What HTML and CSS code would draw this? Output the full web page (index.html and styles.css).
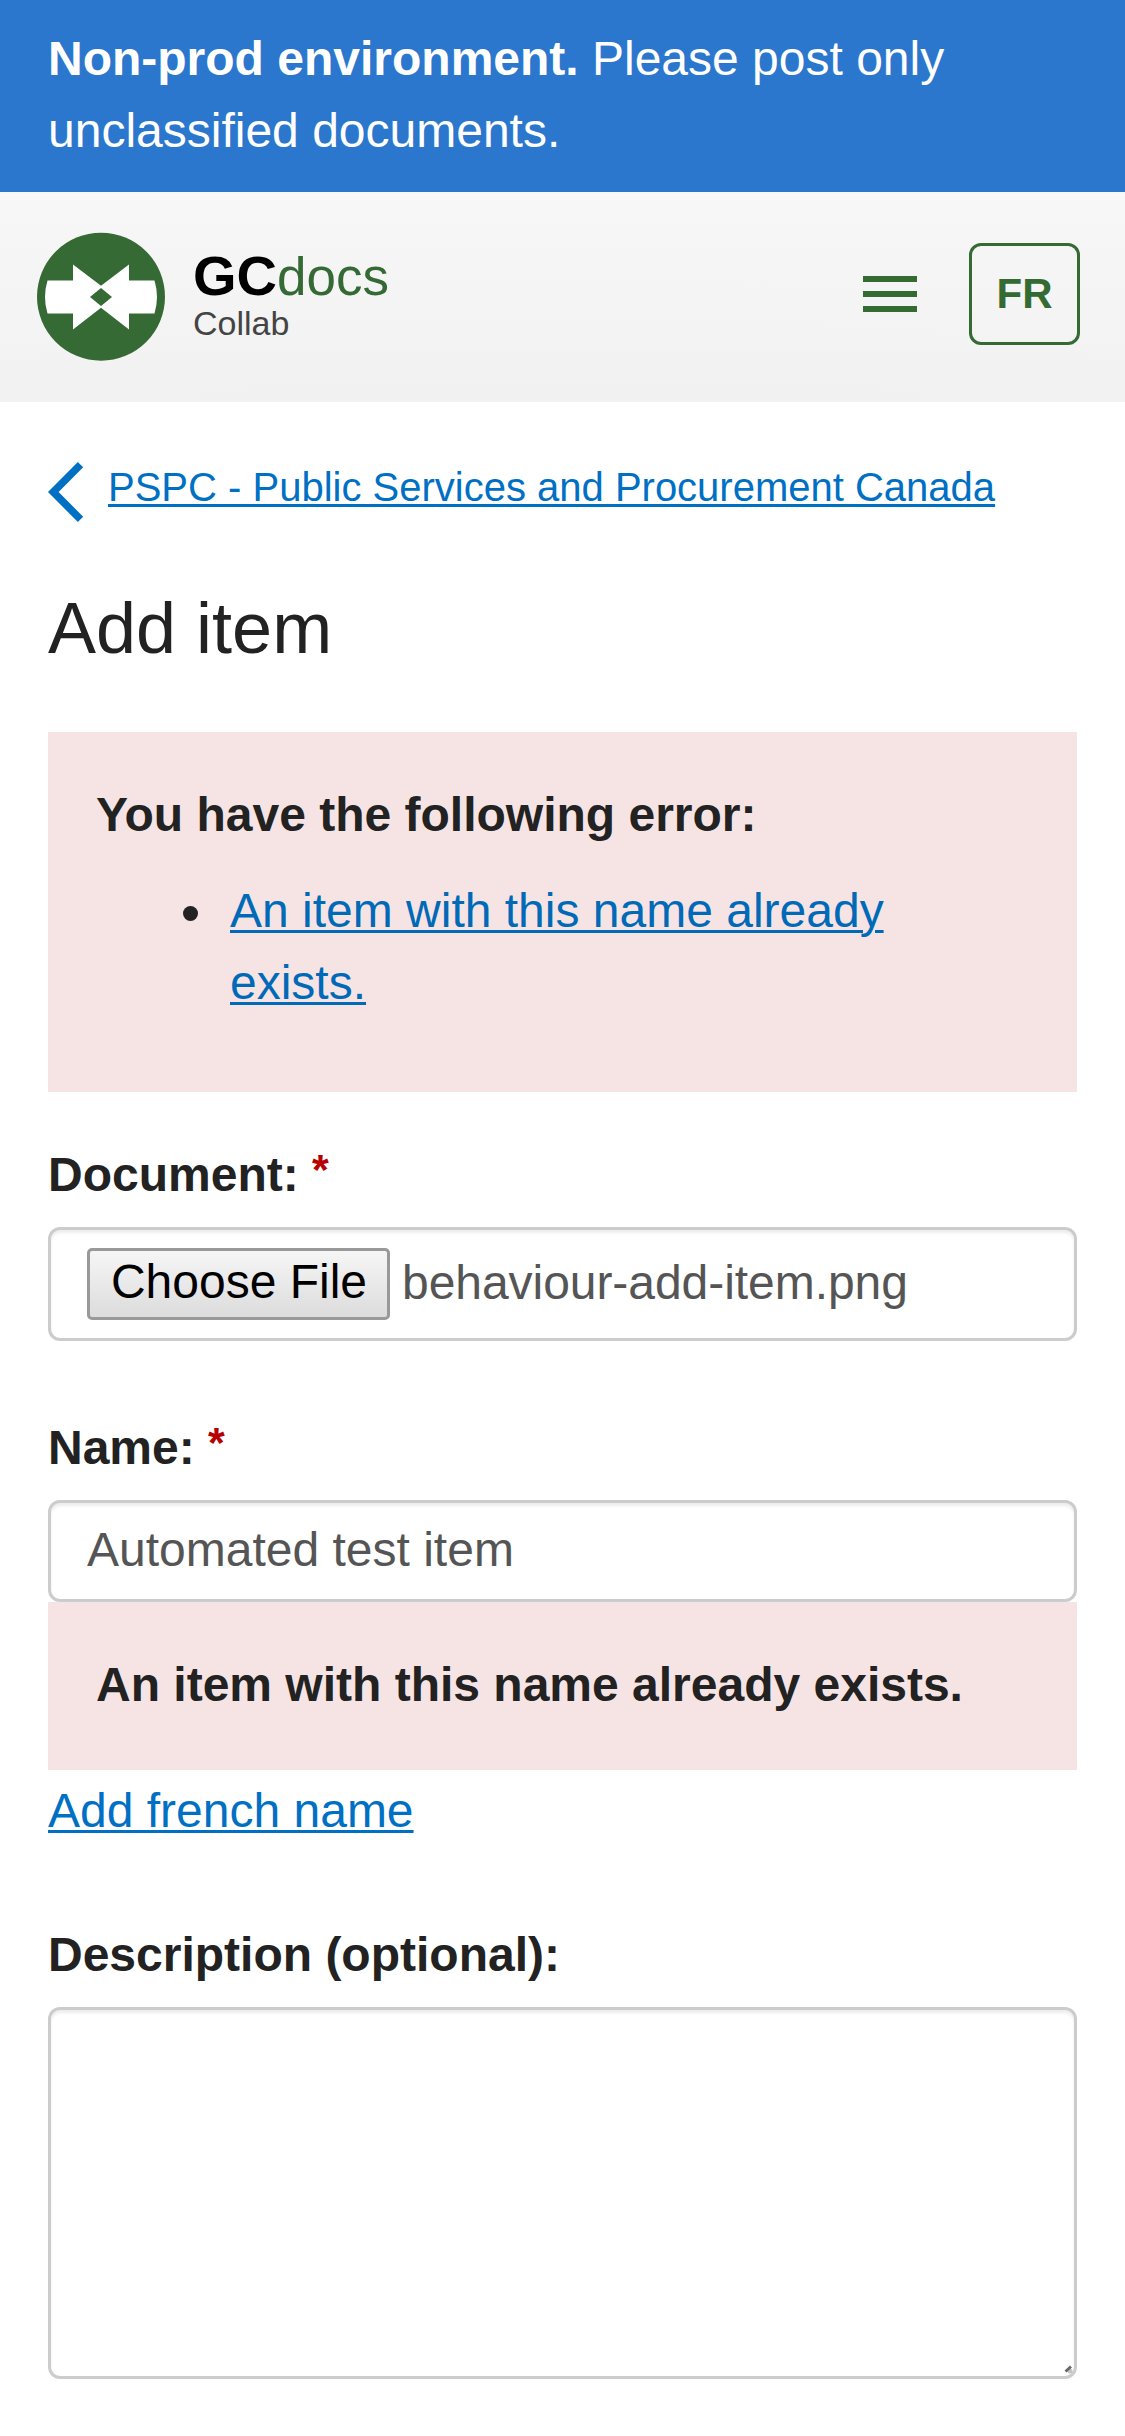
FILE: index.html
```html
<!DOCTYPE html>
<html lang="en">
<head>
<meta charset="utf-8">
<title>Add item - GCdocs Collab</title>
<link rel="stylesheet" href="styles.css">
</head>
<body>
<div class="banner"><strong>Non-prod environment.</strong> Please post only unclassified documents.</div>
<header class="header">
  <a class="brand" href="#">
    <svg class="brand-mark" viewBox="0 0 128 128" aria-hidden="true">
      <circle cx="64" cy="64.2" r="64" fill="#356a35"/>
      <path fill="#fff" d="M36 32 64 53.300 92 32V48H117.500Q122.500 64.500 117.500 81H92V97L64 75.300 36 97V81H10.500Q5.500 64.500 10.500 48H36Z"/>
      <path fill="#356a35" d="M64 55.600 75 64.500 64 73.400 53 64.500Z"/>
    </svg>
    <span class="brand-text">
      <span class="brand-name"><b>GC</b><span class="brand-docs">docs</span></span>
      <span class="brand-sub">Collab</span>
    </span>
  </a>
  <div class="header-tools">
    <svg class="menu-icon" viewBox="0 0 54 36" aria-label="Menu"><path fill="#336b33" d="M0 0h54v6H0zM0 15h54v6H0zM0 30h54v6H0z"/></svg>
    <a class="lang" href="#">FR</a>
  </div>
</header>
<main class="main">
  <nav class="crumb">
    <svg class="chevron" viewBox="0 0 36 60" aria-hidden="true"><path fill="none" stroke="#0070c4" stroke-width="7.500" d="M32.500 2.700 5.200 30 32.500 57.300"/></svg>
    <a class="link" href="#">PSPC - Public Services and Procurement Canada</a>
  </nav>
  <h1 class="title">Add item</h1>
  <section class="alert">
    <h2 class="alert-title">You have the following error:</h2>
    <ul class="alert-list"><li class="alert-item"><a class="link alert-link" href="#name">An item with this name already exists.</a></li></ul>
  </section>
  <form>
    <div class="field">
      <label class="label">Document: <span class="required">*</span></label>
      <div class="control file"><button class="file-button" type="button">Choose File</button><span class="file-name">behaviour-add-item.png</span></div>
    </div>
    <div class="field field-name">
      <label class="label" for="name">Name: <span class="required">*</span></label>
      <input class="control text-input" id="name" type="text" value="Automated test item">
      <p class="field-error">An item with this name already exists.</p>
      <a class="link add-french" href="#">Add french name</a>
    </div>
    <div class="field field-description">
      <label class="label" for="description">Description (optional):</label>
      <div class="textarea-wrap">
        <textarea class="control textarea" id="description"></textarea>
        <svg class="grip" viewBox="0 0 9 9" aria-hidden="true"><circle cx="6" cy="6" r="2.500" fill="#c4c4c4"/><path d="M1.500 6.500 7 1.500" stroke="#666" stroke-width="2.800"/></svg>
      </div>
    </div>
  </form>
</main>
</body>
</html>
```
FILE: styles.css
```css
* { box-sizing: border-box; }
body {
  margin: 0;
  background: #fff;
  color: #222;
  font: 48px/72px "Liberation Sans", Arial, sans-serif;
}
.banner {
  height: 192px;
  padding: 23px 48px 25px;
  background: #2b77cd;
  color: #fff;
}
.header {
  display: flex;
  align-items: flex-start;
  justify-content: space-between;
  height: 210px;
  padding: 40px 45px 0 37px;
  background: radial-gradient(ellipse 90% 80% at 50% 120%, #f1f1f1 0%, transparent 100%), linear-gradient(#f8f8f8, #f5f5f5 30%, #f4f4f4 70%, #f2f2f2);
}
.brand { display: flex; color: #000; text-decoration: none; }
.brand-mark { width: 128px; height: 129px; }
.brand-text { display: flex; flex-direction: column; padding: 13px 0 0 28px; }
.brand-name { font-size: 56px; line-height: 62px; height: 62px; }
.brand-docs { color: #356a35; font-size: 53px; }
.brand-sub { margin-top: -3px; color: #444; font-size: 34px; line-height: 38px; }
.header-tools { display: flex; gap: 52px; padding-top: 11px; }
.menu-icon { width: 54px; height: 36px; margin-top: 33px; }
.lang {
  width: 111px;
  height: 102px;
  border: 3px solid #336b33;
  border-radius: 12px;
  color: #336b33;
  font-size: 42px;
  font-weight: bold;
  line-height: 96px;
  text-align: center;
  text-decoration: none;
}
.main { padding: 0 48px; }
.link {
  color: #0070c4;
  text-decoration-line: underline;
  text-decoration-thickness: 3px;
  text-underline-offset: 3px;
}
.crumb {
  display: flex;
  gap: 24px;
  height: 120px;
  padding-top: 60px;
  font-size: 40px;
  line-height: 50px;
}
.chevron { width: 36px; height: 60px; }
.title {
  height: 108px;
  margin: 54px 0 48px;
  font-size: 72px;
  font-weight: normal;
  line-height: 105px;
}
.alert {
  height: 360px;
  padding: 47px 48px 0;
  background: #f6e4e4;
}
.alert-title { margin: 0 0 24px; font-size: 48px; line-height: 72px; }
.alert-list { display: grid; margin: 0; padding: 0 96px 0 39px; list-style: none; }
.alert-item { display: flex; }
.alert-item::before {
  content: "";
  flex: none;
  width: 15px;
  height: 15px;
  margin: 31px 32px 0 48px;
  border-radius: 50%;
  background: #222;
}
.alert-link { color: #006ab8; }
.field { display: flex; flex-direction: column; align-items: flex-start; padding-top: 47px; }
.label { height: 88px; font-weight: bold; }
.required { color: #b90000; font-size: 43px; line-height: 0; vertical-align: 7px; }
.control {
  width: 100%;
  border: 3px solid #ccc;
  border-radius: 12px;
  background: #fff;
  box-shadow: inset 0 3px 3px rgba(0, 0, 0, .075);
  color: #555;
  font: inherit;
}
.file { display: flex; align-items: flex-start; gap: 12px; height: 114px; padding: 17px 36px 0; }
.file-name { letter-spacing: -.05px; }
.file-button {
  width: 303px;
  height: 72px;
  margin-top: 1px;
  padding: 0 0 4px 1px;
  border: 3px solid #999;
  border-radius: 5px;
  background: linear-gradient(#f6f6f6, #dcdcdc);
  color: #000;
  font: inherit;
  line-height: 62px;
}
.field-name { padding-top: 71px; }
.text-input { height: 102px; padding: 0 36px 3px; }
.field-error {
  width: 100%;
  height: 168px;
  margin: 0;
  padding: 47px 48px 0;
  background: #f6e4e4;
  font-weight: bold;
}
.add-french { margin-top: 5px; }
.field-description { padding-top: 72px; }
.textarea-wrap { position: relative; width: 100%; height: 372px; }
.textarea { display: block; height: 372px; resize: none; }
.grip { position: absolute; right: 4px; bottom: 5px; width: 9px; height: 9px; }
```
